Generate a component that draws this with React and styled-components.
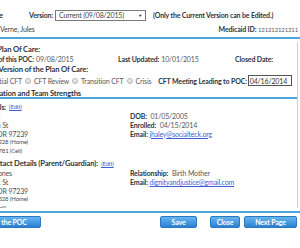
import styled, { createGlobalStyle } from "styled-components";

const Global = createGlobalStyle`
  html, body { margin: 0; padding: 0; background: #fff; overflow: hidden; }
  body {
    font-family: Lato, "Liberation Sans", Arial, sans-serif;
    font-size: 7px;
    letter-spacing: -0.15px;
    color: #4a4f57;
  }
`;

export default function App() {
  return (
    <Page>
      <Global />
      <Head>
        <HeadRow>
          <Cut $w={3} $bold $size={7.6}>Plan Of Care</Cut>
          <Label $gap={26}>Version:</Label>
          <Select>
            <span>Current (09/08/2015)</span>
            <Arrow>▼</Arrow>
          </Select>
          <Label $gap={7}>(Only the Current Version can be Edited.)</Label>
        </HeadRow>
        <NameRow>
          <span>Verne, Jules</span>
          <Push>
            <Label>Medicaid ID:</Label> <Small>121212121211</Small>
          </Push>
        </NameRow>
      </Head>
      <Rule />
      <Panel>
        <Line>
          <Cut $w={40} $bold $size={7.6}>Plan Of Care:</Cut>
        </Line>
        <Fields>
          <Cell>
            <Cut $w={34} $bold>Date of this POC:</Cut>
            <Value>09/08/2015</Value>
          </Cell>
          <Cell>
            <Label>Last Updated:</Label>
            <Value>10/01/2015</Value>
          </Cell>
          <Cell>
            <Label>Closed Date:</Label>
          </Cell>
        </Fields>
        <Line>
          <Cut $w={88} $bold $size={7.6}>Version of the Plan Of Care:</Cut>
        </Line>
        <Radios>
          <Cut $w={22}>
            <Radio $on />
            <Opt>Initial CFT</Opt>
          </Cut>
          <Radio />
          <Opt>CFT Review</Opt>
          <Radio />
          <Opt>Transition CFT</Opt>
          <Radio />
          <Opt>Crisis</Opt>
          <Label $gap={7}>CFT Meeting Leading to POC:</Label>
          <DateBox>04/16/2014</DateBox>
        </Radios>
        <Section>
          <Cut $w={81} $bold $size={7.6}>Youth Information and Team Strengths</Cut>
        </Section>
        <Line $top={3}>
          <Cut $w={6} $bold>Youth Details:</Cut>
          <Edit>(Edit)</Edit>
        </Line>
        <Info>
          <Col>
            <Cut $w={0}>Jules Verne</Cut>
            <Cut $w={8}>1234 Main St</Cut>
            <Cut $w={28}>Portland, OR 97239</Cut>
            <Cut $w={28} $size={6}>(503) 555-1228 (Home)</Cut>
            <Cut $w={22} $size={6}>(503) 555-7781 (Cell)</Cut>
          </Col>
          <Col>
            <div><Label>DOB:</Label> <Value>01/05/2005</Value></div>
            <div><Label>Enrolled:</Label> <Value>04/15/2014</Value></div>
            <div><Label>Email:</Label> <Link>jhaley@socialteck.org</Link></div>
          </Col>
        </Info>
        <Line $top={3}>
          <Cut $w={98} $bold $size={7.6}>Contact Details (Parent/Guardian):</Cut>
          <Edit>(Edit)</Edit>
        </Line>
        <Info>
          <Col>
            <Cut $w={12}>Sarah Jones</Cut>
            <Cut $w={8}>456 Oak St</Cut>
            <Cut $w={28}>Portland, OR 97239</Cut>
            <Cut $w={28} $size={6}>(503) 555-4328 (Home)</Cut>
            <Cut $w={6} $size={6}>(503) 555-0091 (Cell)</Cut>
          </Col>
          <Col>
            <div><Label>Relationship:</Label> <Value>Birth Mother</Value></div>
            <div><Label>Email:</Label> <Link>dignityandjustice@gmail.com</Link></div>
          </Col>
        </Info>
      </Panel>
      <Rule />
      <Buttons>
        <Cut $w={41}>
          <Button $w={70}>Print the POC</Button>
        </Cut>
        <Group>
          <Button $w={37} $after={9}>Save</Button>
          <Button $w={30}>Close</Button>
          <Button $w={53}>Next Page</Button>
        </Group>
      </Buttons>
    </Page>
  );
}

const Page = styled.div`
  width: 300px;
  height: 248px;
  overflow: hidden;
`;

const Head = styled.div`
  padding-top: 9px;
`;

const HeadRow = styled.div`
  display: flex;
  align-items: center;
  height: 12px;
  white-space: nowrap;
`;

const NameRow = styled.div`
  display: flex;
  align-items: center;
  height: 10px;
  margin-top: 3px;
  padding-right: 2px;
  white-space: nowrap;
  color: #3d434c;
`;

const Push = styled.div`
  margin-left: auto;
`;

const Cut = styled.div`
  display: flex;
  align-items: center;
  justify-content: flex-end;
  flex: none;
  width: ${(p) => p.$w}px;
  white-space: nowrap;
  font-weight: ${(p) => (p.$bold ? 700 : 400)};
  font-size: ${(p) => p.$size || 7}px;
  color: ${(p) => (p.$bold ? "#2e3540" : "#4a4f57")};
`;

const Label = styled.span`
  font-weight: 700;
  color: #2e3540;
  margin-left: ${(p) => p.$gap || 0}px;
  white-space: nowrap;
`;

const Value = styled.span`
  margin-left: 2px;
  color: #555a62;
`;

const Small = styled.span`
  font-size: 6px;
  color: #555a62;
`;

const Select = styled.div`
  display: flex;
  align-items: center;
  justify-content: space-between;
  box-sizing: border-box;
  width: 91px;
  height: 11px;
  margin-left: 2px;
  padding: 0 3px;
  border: 1px solid #7a7a7a;
  background: #fff;
  color: #444;
`;

const Arrow = styled.span`
  font-size: 4px;
  color: #111;
`;

const Rule = styled.div`
  height: 2px;
  margin-top: 3px;
  background: #4aa7de;
`;

const Panel = styled.div`
  box-sizing: border-box;
  width: 298px;
  height: 166px;
  margin-top: 3px;
  border-right: 1px solid #cfcfcf;
  overflow: hidden;
  padding-top: 1px;
`;

const Line = styled.div`
  display: flex;
  align-items: center;
  height: 9px;
  margin-top: ${(p) => p.$top || 1}px;
  white-space: nowrap;
`;

const Fields = styled.div`
  display: grid;
  grid-template-columns: 118px 117px 1fr;
  height: 9px;
  margin-top: 1px;
  white-space: nowrap;
`;

const Cell = styled.div`
  display: flex;
  align-items: center;
`;

const Radios = styled.div`
  display: flex;
  align-items: center;
  height: 11px;
  margin-top: 2px;
  white-space: nowrap;
`;

const Radio = styled.span`
  flex: none;
  box-sizing: border-box;
  width: 6px;
  height: 6px;
  margin-left: 3px;
  border-radius: 50%;
  border: 1px solid #b5b5b5;
  background: ${(p) =>
    p.$on ? "radial-gradient(circle, #333 0 1.5px, #eee 2px)" : "linear-gradient(#f4f4f4, #dcdcdc)"};
`;

const Opt = styled.span`
  margin-left: 3px;
  color: #555a62;
`;

const DateBox = styled.div`
  box-sizing: border-box;
  width: 44px;
  height: 11px;
  margin-left: 1px;
  padding-left: 1px;
  border: 1px solid #555;
  display: flex;
  align-items: center;
  color: #333;
`;

const Section = styled.div`
  display: flex;
  align-items: center;
  height: 8px;
  margin-top: 3px;
  border-bottom: 2px solid #4aa7de;
  white-space: nowrap;
`;

const Edit = styled.span`
  margin-left: 3px;
  color: #3b5fd6;
  text-decoration: underline;
  font-size: 6px;
`;

const Link = styled.span`
  color: #3b5fd6;
  text-decoration: underline;
`;

const Info = styled.div`
  display: grid;
  grid-template-columns: 130px 1fr;
  line-height: 8.8px;
  margin-top: 1px;
  white-space: nowrap;
  & > div > div {
    height: 8.8px;
  }
`;

const Col = styled.div`
  display: flex;
  flex-direction: column;
  color: #555a62;
`;

const Buttons = styled.div`
  display: flex;
  align-items: center;
  margin-top: 3px;
  padding-right: 3px;
`;

const Group = styled.div`
  display: flex;
  gap: 4px;
  margin-left: auto;
`;

const Button = styled.div`
  flex: none;
  box-sizing: border-box;
  width: ${(p) => p.$w}px;
  height: 12px;
  margin-right: ${(p) => p.$after || 0}px;
  display: flex;
  align-items: center;
  justify-content: center;
  border: 1px solid #2b78c2;
  border-radius: 2px;
  background: linear-gradient(#66b6f0, #2c80d2);
  color: #fff;
  font-weight: 700;
  font-size: 7px;
`;
